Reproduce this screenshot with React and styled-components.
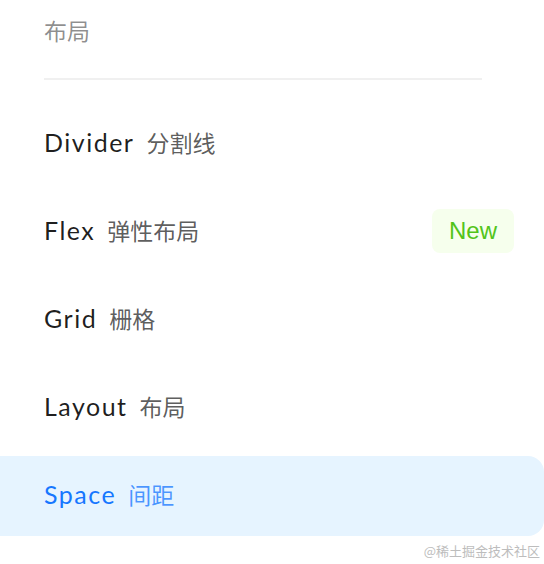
import React from "react";
import styled, { createGlobalStyle } from "styled-components";

const Global = createGlobalStyle`
  html, body { margin: 0; padding: 0; background: #fff; }
  body { font-family: Lato, "Noto Sans CJK SC", sans-serif; }
  #root { width: 544px; height: 564px; overflow: hidden; }
`;

const Page = styled.div`
  position: relative;
  width: 544px;
  height: 564px;
  overflow: hidden;
`;

const GroupTitle = styled.div`
  height: 64px;
  padding-left: 44px;
  display: flex;
  align-items: center;
  font-size: 23px;
  line-height: 1;
  color: rgba(0, 0, 0, 0.45);
  font-family: "Noto Sans CJK SC", sans-serif;
  padding-bottom: 3px;
  box-sizing: border-box;
`;

const Rule = styled.div`
  margin: 14px 62px 24px 44px;
  height: 2px;
  background: #f0f0f0;
`;

const List = styled.div`
  display: flex;
  flex-direction: column;
  gap: 8px;
`;

const Item = styled.div`
  height: 80px;
  display: flex;
  align-items: center;
  padding: 0 30px 0 44px;
  border-radius: 0 16px 16px 0;
  background: ${(p) => (p.$active ? "#e6f4ff" : "transparent")};
  color: ${(p) => (p.$active ? "#1677ff" : "rgba(0,0,0,0.88)")};
`;

const Label = styled.div`
  display: flex;
  align-items: baseline;
  line-height: 1;
  padding-bottom: 4px;
`;

const Name = styled.span`
  font-family: Lato, sans-serif;
  font-size: 25px;
  font-weight: 400;
  letter-spacing: 1.5px;
`;

const Sub = styled.span`
  margin-left: 12px;
  font-family: "Noto Sans CJK SC", sans-serif;
  font-size: 23px;
  color: ${(p) => (p.$active ? "rgba(22,119,255,0.75)" : "rgba(0,0,0,0.65)")};
`;

const Badge = styled.span`
  margin-left: auto;
  width: 82px;
  height: 44px;
  display: flex;
  align-items: center;
  justify-content: center;
  border-radius: 8px;
  background: #f6ffed;
  color: #52c41a;
  font-family: "Liberation Sans", Arial, sans-serif;
  font-size: 24px;
  margin-top: -2px;
`;

const Watermark = styled.div`
  position: absolute;
  right: 4px;
  bottom: 4px;
  font-family: "Noto Sans CJK SC", serif;
  font-size: 13px;
  color: #bdbdbd;
`;

const items = [
  { name: "Divider", sub: "分割线" },
  { name: "Flex", sub: "弹性布局", badge: "New" },
  { name: "Grid", sub: "栅格" },
  { name: "Layout", sub: "布局" },
  { name: "Space", sub: "间距", active: true },
];

export default function App() {
  return (
    <Page>
      <Global />
      <GroupTitle>布局</GroupTitle>
      <Rule />
      <List>
        {items.map((it) => (
          <Item key={it.name} $active={it.active}>
            <Label>
              <Name>{it.name}</Name>
              <Sub $active={it.active}>{it.sub}</Sub>
            </Label>
            {it.badge && <Badge>{it.badge}</Badge>}
          </Item>
        ))}
      </List>
      <Watermark>@稀土掘金技术社区</Watermark>
    </Page>
  );
}
